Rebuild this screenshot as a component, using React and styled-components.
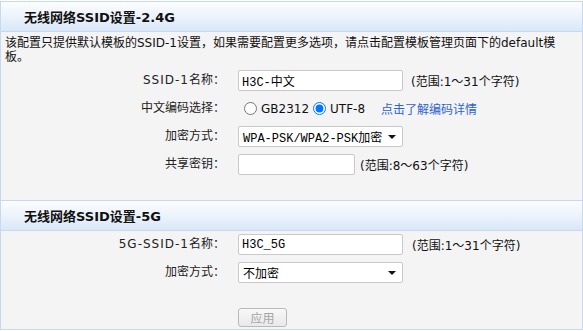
import React, { useState } from "react";
import styled, { createGlobalStyle } from "styled-components";

const GlobalStyle = createGlobalStyle`
  body {
    margin: 0;
    background: #fff;
    font-family: "DejaVu Sans", "Noto Sans CJK SC", sans-serif;
    font-size: 12px;
    color: #000;
  }
`;

const Page = styled.div`
  padding-top: 1px;
`;

const Panel = styled.div`
  border: 1px solid #c6d9ef;
  background: #f4f4f4;
`;

const SectionHeader = styled.div`
  height: 29px;
  display: flex;
  align-items: center;
  padding-left: 23px;
  background: linear-gradient(to bottom, #fbfdff 0%, #eef4fc 45%, #d9e7f8 100%);
  border-bottom: 1px solid #c6d9ef;
  border-top: ${(p) => (p.$divider ? "1px solid #c6d9ef" : "none")};
  font-family: "DejaVu Sans", "Noto Sans CJK SC", sans-serif;
  font-size: 13px;
  font-weight: 700;
  color: #111;
`;

const Intro = styled.p`
  margin: 0;
  padding: 4px 0 0 4px;
  max-width: 558px;
  line-height: 14px;
  color: #111;
`;

const FormGrid = styled.div`
  display: grid;
  grid-template-columns: 224px 1fr;
  column-gap: 13px;
  row-gap: 7px;
  align-items: center;
  padding: ${(p) => p.$pad};
`;

const Label = styled.div`
  text-align: right;
  height: 21px;
  line-height: 21px;
  color: #222;
`;

// latin part of a label is set a little wider than body text
const Latin = styled.span`
  letter-spacing: 1px;
`;

const Field = styled.div`
  display: flex;
  align-items: center;
  height: 21px;
`;

const TextInput = styled.input`
  box-sizing: border-box;
  width: ${(p) => p.$w}px;
  height: 21px;
  margin: 0;
  padding: 0 3px;
  border: 1px solid #c9c9c9;
  border-radius: 2px;
  background: #fff;
  font-family: "Liberation Mono", "Noto Sans CJK SC", monospace;
  font-size: 12px;
  color: #000;
  outline: none;
`;

const Hint = styled.span`
  margin-left: ${(p) => p.$gap}px;
  color: #111;
  white-space: nowrap;
`;

const RadioLabel = styled.label`
  display: flex;
  align-items: center;
  margin-right: ${(p) => p.$gap}px;
  color: #111;
`;

const Radio = styled.input`
  width: 13px;
  height: 13px;
  margin: 0 4px 0 ${(p) => p.$left}px;
`;

const Link = styled.a`
  color: #2b63d4;
  text-decoration: none;
  cursor: pointer;
`;

const Select = styled.div`
  box-sizing: border-box;
  width: 165px;
  height: 21px;
  display: flex;
  align-items: center;
  justify-content: space-between;
  padding: 0 6px 0 4px;
  border: 1px solid #c9c9c9;
  border-radius: 2px;
  background: #fff;
  font-family: "Liberation Mono", "Noto Sans CJK SC", monospace;
  font-size: 12px;
`;

const Arrow = styled.span`
  width: 0;
  height: 0;
  border-left: 4px solid transparent;
  border-right: 4px solid transparent;
  border-top: 4px solid #111;
`;

const ApplyButton = styled.button`
  box-sizing: border-box;
  width: 49px;
  height: 19px;
  margin-top: 18px;
  padding: 0;
  border: 1px solid #b9b9b9;
  border-radius: 3px;
  background: linear-gradient(to bottom, #f8f8f8, #e9e9e9);
  font-family: "Noto Sans CJK SC", sans-serif;
  font-size: 12px;
  line-height: 17px;
  color: #a5a5a5;
`;

const Spacer = styled.div``;

export default function App() {
  const [encoding, setEncoding] = useState("utf8");
  const [name24, setName24] = useState("H3C-中文");
  const [key, setKey] = useState("");
  const [name5, setName5] = useState("H3C_5G");

  return (
    <Page>
      <GlobalStyle />
      <Panel>
        <SectionHeader>无线网络SSID设置-2.4G</SectionHeader>
        <Intro>
          该配置只提供默认模板的SSID-1设置，如果需要配置更多选项，请点击配置模板管理页面下的default模板。
        </Intro>
        <FormGrid $pad="6px 0 25px 0">
          <Label>
            <Latin>SSID-1</Latin>名称：
          </Label>
          <Field>
            <TextInput $w={165} value={name24} onChange={(e) => setName24(e.target.value)} />
            <Hint $gap={8}>(范围:1～31个字符)</Hint>
          </Field>

          <Label>中文编码选择：</Label>
          <Field>
            <RadioLabel $gap={4}>
              <Radio
                type="radio"
                name="enc"
                $left={6}
                checked={encoding === "gb"}
                onChange={() => setEncoding("gb")}
              />
              GB2312
            </RadioLabel>
            <RadioLabel $gap={16}>
              <Radio
                type="radio"
                name="enc"
                $left={0}
                checked={encoding === "utf8"}
                onChange={() => setEncoding("utf8")}
              />
              UTF-8
            </RadioLabel>
            <Link>点击了解编码详情</Link>
          </Field>

          <Label>加密方式：</Label>
          <Field>
            <Select>
              WPA-PSK/WPA2-PSK加密
              <Arrow />
            </Select>
          </Field>

          <Label>共享密钥：</Label>
          <Field>
            <TextInput $w={117} value={key} onChange={(e) => setKey(e.target.value)} />
            <Hint $gap={5}>(范围:8～63个字符)</Hint>
          </Field>
        </FormGrid>

        <SectionHeader $divider>无线网络SSID设置-5G</SectionHeader>
        <FormGrid $pad="3px 0 2px 0">
          <Label>
            <Latin>5G-SSID-1</Latin>名称：
          </Label>
          <Field>
            <TextInput $w={165} value={name5} onChange={(e) => setName5(e.target.value)} />
            <Hint $gap={9}>(范围:1～31个字符)</Hint>
          </Field>

          <Label>加密方式：</Label>
          <Field>
            <Select>
              不加密
              <Arrow />
            </Select>
          </Field>

          <Spacer />
          <div>
            <ApplyButton disabled>应用</ApplyButton>
          </div>
        </FormGrid>
      </Panel>
    </Page>
  );
}
